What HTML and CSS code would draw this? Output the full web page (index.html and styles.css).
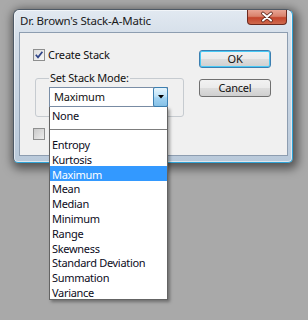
FILE: index.html
```html
<!DOCTYPE html>
<html>
<head>
<meta charset="utf-8">
<link rel="stylesheet" href="styles.css">
</head>
<body>
<div class="window">
  <div class="titlebar">
    <span class="title">Dr. Brown's Stack-A-Matic</span>
    <div class="close">
      <svg width="38" height="14" viewBox="0 0 38 14">
        <path d="M15 3.5 L23 10.5 M23 3.5 L15 10.5" stroke="#5b2418" stroke-width="3.6" stroke-linecap="round" fill="none"/>
        <path d="M15 3.5 L23 10.5 M23 3.5 L15 10.5" stroke="#ffffff" stroke-width="2" stroke-linecap="round" fill="none"/>
      </svg>
    </div>
  </div>
  <div class="client">
    <div class="left">
      <div class="check">
        <span class="box">
          <svg width="10" height="10" viewBox="0 0 10 10"><path d="M1.8 4.8 L4 7.4 L8.4 1.8" stroke="#2f4488" stroke-width="1.7" fill="none"/></svg>
        </span>
        <span class="label">Create Stack</span>
      </div>
      <fieldset class="group">
        <legend>Set Stack Mode:</legend>
        <div class="combo">
          <span class="combo-value">Maximum</span>
          <span class="combo-btn">
            <svg width="6" height="4" viewBox="0 0 6 4"><path d="M0 0 L6 0 L3 3.5 Z" fill="#000"/></svg>
          </span>
          <ul class="list">
            <li>None</li>
            <li class="sep"></li>
            <li>Entropy</li>
            <li>Kurtosis</li>
            <li class="selected">Maximum</li>
            <li>Mean</li>
            <li>Median</li>
            <li>Minimum</li>
            <li>Range</li>
            <li>Skewness</li>
            <li>Standard Deviation</li>
            <li>Summation</li>
            <li>Variance</li>
          </ul>
        </div>
      </fieldset>
      <div class="check second">
        <span class="box empty"></span>
      </div>
    </div>
    <div class="buttons">
      <div class="btn default">OK</div>
      <div class="btn">Cancel</div>
    </div>
  </div>
</div>
</body>
</html>
```

FILE: styles.css
```css
html, body {
  margin: 0;
  padding: 0;
}
body {
  background: #a9a9a9;
  width: 308px;
  height: 320px;
  overflow: hidden;
  padding: 9px 0 0 13px;
  box-sizing: border-box;
  font-family: "Noto Sans", "Open Sans", sans-serif;
  font-size: 11px;
  color: #111;
}
.window {
  width: 280px;
  height: 154px;
  box-sizing: border-box;
  border: 1px solid #4f5a66;
  border-right-color: #2fa3d6;
  border-bottom-color: #2fa3d6;
  border-radius: 6px 6px 5px 5px;
  background: linear-gradient(180deg, #e2e9f1 0%, #d3dde8 20%, #c6d3e1 60%, #b9c9da 100%);
  box-shadow: 2px 3px 10px 3px rgba(0,0,0,0.5), inset 0 0 0 1px rgba(255,255,255,0.55);
  padding: 0 4px 6px 5px;
  display: flex;
  flex-direction: column;
}
.titlebar {
  height: 22px;
  display: flex;
  justify-content: space-between;
  align-items: flex-start;
}
.title {
  line-height: 22px;
  padding-left: 1px;
  font-size: 11.5px;
  color: #1a1a1a;
  letter-spacing: -0.2px;
}
.close {
  width: 38px;
  height: 14px;
  margin-right: 1px;
  border: 1px solid #6b2a1f;
  border-top: none;
  border-radius: 0 0 4px 4px;
  background: linear-gradient(180deg, #e9a595 0%, #d9826c 45%, #c4452c 55%, #cf6a4e 100%);
  display: flex;
}
.client {
  height: 124px;
  box-sizing: border-box;
  border: 1px solid #8d9db0;
  background: #f0f0f0;
  display: flex;
  padding: 16px 0 0 13px;
}
.left {
  width: 151px;
  display: flex;
  flex-direction: column;
}
.check {
  display: flex;
  align-items: center;
  height: 12px;
}
.box {
  width: 12px;
  height: 12px;
  box-sizing: border-box;
  border: 1px solid #8e8f8f;
  background: linear-gradient(135deg, #dcdcdc, #f8f8f8);
  display: flex;
  align-items: center;
  justify-content: center;
}
.box.empty {
  background: linear-gradient(135deg, #c9c9c9, #ececec);
}
.label {
  margin-left: 3px;
  line-height: 12px;
  letter-spacing: -0.2px;
}
.group {
  margin: 11px 0 0 2px;
  padding: 3px 0 9px 13px;
  width: 149px;
  box-sizing: border-box;
  border: 1px solid #c6cbd0;
  border-radius: 3px;
  min-width: 0;
}
.group legend {
  padding: 0 1px;
  margin-left: 0;
  line-height: 12px;
  letter-spacing: -0.2px;
}
.combo {
  position: relative;
  width: 119px;
  height: 20px;
  box-sizing: border-box;
  border: 1px solid #7a8ea6;
  background: #fff;
  display: flex;
  justify-content: space-between;
}
.combo-value {
  line-height: 18px;
  padding-left: 4px;
  letter-spacing: -0.2px;
}
.combo-btn {
  width: 15px;
  height: 20px;
  margin: -1px -1px 0 0;
  box-sizing: border-box;
  border: 1px solid #3c7fb1;
  border-radius: 2px;
  background: linear-gradient(180deg, #e6f4fc 0%, #bfe3f8 45%, #a0d2f2 55%, #86c1e6 100%);
  display: flex;
  align-items: center;
  justify-content: center;
}
.list {
  position: absolute;
  left: -1px;
  top: calc(100% + 1px);
  width: 119px;
  box-sizing: border-box;
  margin: 0;
  padding: 0;
  list-style: none;
  background: #fff;
  border: 1px solid #646464;
  border-top: none;
  box-shadow: 2px 2px 3px rgba(0,0,0,0.35);
  z-index: 2;
}
.list li {
  height: 14.8px;
  box-sizing: border-box;
  padding-top: 1.5px;
  line-height: 14.8px;
  padding-left: 2px;
  letter-spacing: -0.3px;
  color: #0c0c1c;
  white-space: nowrap;
}
.list li.sep {
  display: flex;
  align-items: center;
  padding: 0;
}
.list li.sep::before {
  content: "";
  display: block;
  width: 100%;
  height: 1px;
  background: #7d7d7d;
  margin-top: 1px;
}
.list li.selected {
  background: #3399ff;
  color: #fff;
}
.second {
  margin-top: 11px;
}
.buttons {
  margin: 1px 0 0 15px;
  display: flex;
  flex-direction: column;
  gap: 11px;
}
.btn {
  width: 72px;
  height: 18px;
  box-sizing: border-box;
  border: 1px solid #707070;
  border-radius: 3px;
  background: linear-gradient(180deg, #f2f2f2 0%, #ebebeb 48%, #dddddd 52%, #cfcfcf 100%);
  text-align: center;
  line-height: 16px;
  letter-spacing: -0.2px;
}
.btn.default {
  border-color: #3c7fb1;
  box-shadow: inset 0 0 0 1px #49c9f5;
}
```
